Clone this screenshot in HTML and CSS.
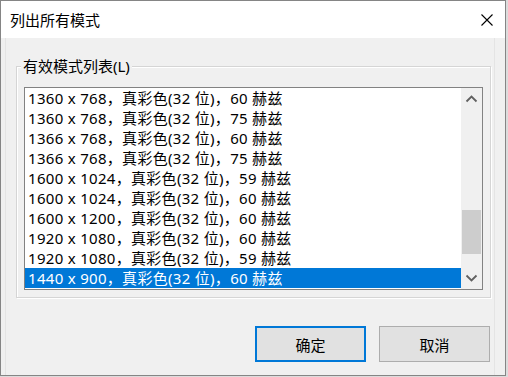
FILE: index.html
```html
<!DOCTYPE html>
<html lang="zh-CN">
<head>
<meta charset="utf-8">
<title>列出所有模式</title>
<link rel="stylesheet" href="styles.css">
</head>
<body>
<div class="window">
  <div class="titlebar">
    <span class="title">列出所有模式</span>
    <svg class="close" width="12" height="12" viewBox="0 0 12 12"><path d="M0.5 0.5 L11.5 11.5 M11.5 0.5 L0.5 11.5" stroke="#000" stroke-width="1.1" fill="none"/></svg>
  </div>
  <div class="client">
    <div class="group">
      <span class="group-label">有效模式列表(L)</span>
      <div class="list">
        <div class="rows">
          <div class="row">1360 x 768，真彩色(32 位)，60 赫兹</div>
          <div class="row">1360 x 768，真彩色(32 位)，75 赫兹</div>
          <div class="row">1366 x 768，真彩色(32 位)，60 赫兹</div>
          <div class="row">1366 x 768，真彩色(32 位)，75 赫兹</div>
          <div class="row">1600 x 1024，真彩色(32 位)，59 赫兹</div>
          <div class="row">1600 x 1024，真彩色(32 位)，60 赫兹</div>
          <div class="row">1600 x 1200，真彩色(32 位)，60 赫兹</div>
          <div class="row">1920 x 1080，真彩色(32 位)，60 赫兹</div>
          <div class="row">1920 x 1080，真彩色(32 位)，59 赫兹</div>
          <div class="row sel">1440 x 900，真彩色(32 位)，60 赫兹</div>
        </div>
        <div class="scrollbar">
          <div class="sb-btn"><svg width="21" height="21" viewBox="0 0 21 21"><polyline points="5.5,13.5 10.5,8.5 15.5,13.5" fill="none" stroke="#606060" stroke-width="1.8"/></svg></div>
          <div class="sb-track"><div class="sb-thumb"></div></div>
          <div class="sb-btn"><svg width="21" height="21" viewBox="0 0 21 21"><polyline points="5.5,7.5 10.5,12.5 15.5,7.5" fill="none" stroke="#606060" stroke-width="1.8"/></svg></div>
        </div>
      </div>
    </div>
    <div class="buttons">
      <button class="btn default">确定</button>
      <button class="btn">取消</button>
    </div>
  </div>
</div>
</body>
</html>
```
FILE: styles.css
```css
html, body {
  margin: 0;
  padding: 0;
}
body {
  background: #dcdcdc;
  font-family: "Noto Sans", "Noto Sans CJK SC", sans-serif;
  font-size: 15px;
  color: #000;
}
.window {
  box-sizing: border-box;
  width: 506px;
  height: 376px;
  border: 1px solid #858585;
  display: flex;
  flex-direction: column;
  background: #f0f0f0;
}
.titlebar {
  height: 37px;
  background: #fff;
  display: flex;
  align-items: center;
  justify-content: space-between;
  padding: 0 12px 0 9px;
}
.title {
  font-size: 15px;
  line-height: 20px;
}
.close {
  display: block;
}
.client {
  flex: 1;
  display: flex;
  flex-direction: column;
  background:
    linear-gradient(#e4e4e4, #e4e4e4) 4px 0 / 1px 100% no-repeat,
    linear-gradient(#e4e4e4, #e4e4e4) 493px 0 / 1px 100% no-repeat,
    #f0f0f0;
}
.group {
  position: relative;
  margin: 28px 14px 0 15px;
  border: 1px solid #d5d5d5;
  box-shadow: inset 1px 1px 0 #fff, 1px 1px 0 #fff;
  padding: 20px 7px 7px 7px;
}
.group-label {
  position: absolute;
  top: -11px;
  left: 4px;
  padding: 0 2px;
  line-height: 20px;
  background: #f0f0f0;
}
.list {
  width: 459px;
  height: 203px;
  box-sizing: border-box;
  border: 1px solid #828282;
  background: #fff;
  display: flex;
}
.rows {
  flex: 1;
  min-width: 0;
}
.row {
  height: 20px;
  line-height: 20px;
  padding-left: 3px;
  white-space: nowrap;
  letter-spacing: 0.3px;
}
.row.sel {
  background: #0078d7;
  color: #fff;
}
.scrollbar {
  width: 21px;
  background: #f0f0f0;
  display: flex;
  flex-direction: column;
}
.sb-btn {
  height: 21px;
}
.sb-btn svg {
  display: block;
}
.sb-track {
  flex: 1;
  padding: 0 1px;
}
.sb-thumb {
  margin-top: 101px;
  height: 44px;
  background: #cdcdcd;
}
.buttons {
  display: flex;
  justify-content: flex-end;
  gap: 13px;
  margin-top: 28px;
  padding-right: 15px;
}
.btn {
  box-sizing: border-box;
  width: 111px;
  height: 36px;
  margin: 0;
  padding: 0;
  background: #e1e1e1;
  border: 1px solid #adadad;
  font-family: "Noto Sans", "Noto Sans CJK SC", sans-serif;
  font-size: 15px;
  color: #000;
}
.btn.default {
  border: 2px solid #0078d7;
}
```
